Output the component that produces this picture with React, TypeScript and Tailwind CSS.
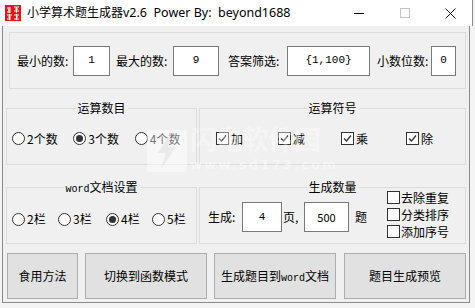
import React from "react";

const CJK = "font-['Microsoft_YaHei','Noto_Sans_CJK_SC',sans-serif]";
const MONO = "font-['Liberation_Mono',monospace]";

function Radio({ checked, label }: { checked?: boolean; label: React.ReactNode }) {
  return (
    <div className="flex items-center">
      <span className="w-[13px] h-[13px] rounded-full border border-[#333333] bg-white flex items-center justify-center">
        {checked && <span className="w-[7px] h-[7px] rounded-full bg-[#333333]" />}
      </span>
      <span className="ml-[2px] leading-none">{label}</span>
    </div>
  );
}

function Check({ label }: { label: string }) {
  return (
    <div className="flex items-center">
      <span className="w-[13px] h-[13px] border border-[#333333] bg-white flex items-center justify-center">
        <svg width="11" height="11" viewBox="0 0 11 11">
          <path d="M2 5.5 L4.5 8 L9 2.5" fill="none" stroke="#333333" strokeWidth="1.3" />
        </svg>
      </span>
      <span className="ml-[2px] leading-none">{label}</span>
    </div>
  );
}

function EmptyCheck({ label }: { label: string }) {
  return (
    <div className="flex items-center h-[13px]">
      <span className="w-[13px] h-[13px] border border-[#333333] bg-white" />
      <span className="ml-[1px] leading-none">{label}</span>
    </div>
  );
}

function Input({ value, w, mono = true }: { value: string; w: string; mono?: boolean }) {
  return (
    <div
      className={`${w} h-[30px] border border-[#7a7a7a] bg-white flex items-center justify-center text-[11px] ${
        mono ? MONO : ""
      }`}
    >
      {value}
    </div>
  );
}

function Group({
  title,
  className,
  children,
}: {
  title?: React.ReactNode;
  className: string;
  children: React.ReactNode;
}) {
  return (
    <div className={`relative border border-[#dcdcdc] ${className}`}>
      {title && (
        <div className="absolute left-1/2 -translate-x-1/2 -top-[9px] px-[2px] bg-[#f0f0f0] leading-[16px] whitespace-nowrap">
          {title}
        </div>
      )}
      {children}
    </div>
  );
}

function Btn({ w, children }: { w: string; children: React.ReactNode }) {
  return (
    <div className={`${w} h-[46px] bg-[#e1e1e1] border border-[#adadad] flex items-center justify-center`}>
      {children}
    </div>
  );
}

export default function App() {
  return (
    <div className={`relative w-[475px] h-[308px] bg-[#f4f4f4] flex flex-col text-[12px] text-black ${CJK}`}>
      {/* Title bar */}
      <div className="h-[26px] bg-white flex items-center shrink-0 border-r border-[#8a8a8a] mr-[2px]">
        <svg className="ml-[5px]" width="16" height="16" viewBox="0 0 16 16">
          <rect width="16" height="16" fill="#e8141a" />
          <path d="M2 3h4M3 5h3M2 7h4M9 2h5M10 4h3M9 6h5M2 10h5M3 12h3M2 14h4M9 10h5M11 12h2M9 14h5" stroke="#fff" strokeWidth="1" />
          <path d="M4 2v6M11.5 2v6M4.5 9v6M11.5 9v6" stroke="#fff" strokeWidth="1" />
        </svg>
        <span className="ml-[6px] whitespace-pre leading-none text-[12px]">
          小学算术题生成器<span className="font-['Segoe_UI','Noto_Sans',sans-serif] text-[12.5px]">v2.6  Power By:  beyond1688</span>
        </span>
        <div className="ml-auto flex items-center h-full">
          <div className="w-[46px] h-full flex items-center justify-center">
            <div className="w-[10px] h-px bg-black" />
          </div>
          <div className="w-[46px] h-full flex items-center justify-center">
            <div className="w-[10px] h-[10px] border border-[#c4c4c4]" />
          </div>
          <div className="w-[44px] h-full flex items-center justify-center">
            <svg width="11" height="11" viewBox="0 0 11 11">
              <path d="M0.5 0.5 L10.5 10.5 M10.5 0.5 L0.5 10.5" stroke="#111" strokeWidth="1" />
            </svg>
          </div>
        </div>
      </div>

      {/* Body */}
      <div className="flex-1 pl-[2px] pr-[5px] pb-[5px] flex">
        <div className="flex-1 bg-[#f0f0f0] border-l border-r border-b border-[#8a8a8a] flex flex-col pt-[6px] pb-[3px]">
          {/* Group 1 */}
          <Group className="ml-[6px] w-[457px] h-[57px] flex items-center pl-[7px]">
            <span className="w-[56px] whitespace-nowrap">最小的数:</span>
            <Input value="1" w="w-[37px]" />
            <span className="ml-[6px] w-[57px] whitespace-nowrap">最大的数:</span>
            <Input value="9" w="w-[46px]" />
            <span className="ml-[9px] w-[59px] whitespace-nowrap">答案筛选:</span>
            <Input value="{1,100}" w="w-[83px]" />
            <span className="ml-[7px] w-[54px] whitespace-nowrap">小数位数:</span>
            <Input value="0" w="w-[25px]" />
          </Group>

          {/* Row 2 */}
          <div className="flex mt-[19px] ml-[3px] gap-[2px]">
            <Group title="运算数目" className="w-[191px] h-[57px] flex items-center pl-[5px] pt-[4px]">
              <div className="w-[63px]"><Radio label="2个数" /></div>
              <div className="w-[63px]"><Radio checked label="3个数" /></div>
              <div className="w-[63px]"><Radio label="4个数" /></div>
            </Group>
            <Group title="运算符号" className="w-[267px] h-[57px] flex items-center pl-[16px] pt-[4px]">
              <div className="w-[62px]"><Check label="加" /></div>
              <div className="w-[63px]"><Check label="减" /></div>
              <div className="w-[65px]"><Check label="乘" /></div>
              <div><Check label="除" /></div>
            </Group>
          </div>

          {/* Row 3 */}
          <div className="flex mt-[22px] ml-[3px] gap-[2px]">
            <Group
              title={
                <span>
                  <span className={`${MONO} text-[10px]`}>word</span>文档设置
                </span>
              }
              className="w-[191px] h-[57px] flex items-center pl-[5px] pt-[7px]"
            >
              <div className="w-[46px]"><Radio label="2栏" /></div>
              <div className="w-[48px]"><Radio label="3栏" /></div>
              <div className="w-[46px]"><Radio checked label="4栏" /></div>
              <div><Radio label="5栏" /></div>
            </Group>
            <Group title="生成数量" className="w-[267px] h-[57px] flex items-center pl-[8px]">
              <div className="flex items-center pt-[3px]">
                <span className="w-[34px]">生成:</span>
                <Input value="4" w="w-[40px]" />
                <span className="ml-[1px] w-[21px]">页,</span>
                <Input value="500" w="w-[45px]" mono={false} />
                <span className="ml-[6px] w-[32px]">题</span>
              </div>
              <div className="flex flex-col gap-[4px] -mt-[2px]">
                <EmptyCheck label="去除重复" />
                <EmptyCheck label="分类排序" />
                <EmptyCheck label="添加序号" />
              </div>
            </Group>
          </div>

          {/* Buttons */}
          <div className="flex mt-[9px] ml-[4px]">
            <Btn w="w-[71px]">食用方法</Btn>
            <div className="ml-[7px]"><Btn w="w-[122px]">切换到函数模式</Btn></div>
            <div className="ml-[7px]">
              <Btn w="w-[122px]">
                <span>
                  生成题目到<span className={`${MONO} text-[10px]`}>word</span>文档
                </span>
              </Btn>
            </div>
            <div className="ml-[8px]"><Btn w="w-[122px]">题目生成预览</Btn></div>
          </div>
        </div>
      </div>

      {/* Watermark overlay */}
      <div className="absolute left-[147px] top-[130px] pointer-events-none">
        <svg width="40" height="42" viewBox="0 0 40 42">
          <rect x="0" y="0" width="40" height="42" rx="3" fill="#ffffff" fillOpacity="0.45" />
          <path d="M24 3 L11 23 L19 23 L14 39 L29 17 L21 17 Z" fill="#eaeaea" />
        </svg>
      </div>
      <div className="absolute left-[190px] top-[120px] pointer-events-none flex flex-col items-start">
        <span className="text-[27px] leading-[38px] tracking-[-1px] text-white/40 font-bold">闪电软件园</span>
        <span className={`text-[13px] leading-[14px] font-bold tracking-[2.2px] text-white/45 font-['DejaVu_Sans',sans-serif]`}>
          www.sd173.com
        </span>
      </div>
    </div>
  );
}
